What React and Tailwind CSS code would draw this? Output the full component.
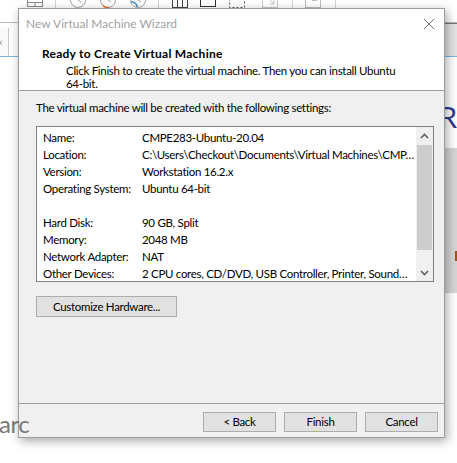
import React from "react";

const rows = [
  ["Name:", "CMPE283-Ubuntu-20.04"],
  ["Location:", "C:\\Users\\Checkout\\Documents\\Virtual Machines\\CMP…"],
  ["Version:", "Workstation 16.2.x"],
  ["Operating System:", "Ubuntu 64-bit"],
  ["", ""],
  ["Hard Disk:", "90 GB, Split"],
  ["Memory:", "2048 MB"],
  ["Network Adapter:", "NAT"],
  ["Other Devices:", "2 CPU cores, CD/DVD, USB Controller, Printer, Sound…"],
];

// body text: Lato squeezed a little to get Segoe UI widths
const txt = "text-[11.5px] tracking-[-0.3px] text-black";

const Sep = ({ ml }) => <div className={`w-px h-[8px] bg-[#d4d4d4] ${ml}`} />;

const Toolbar = () => (
  <div className="h-[23px] border-b border-[#b9b9b9] flex items-start">
    <svg className="ml-[27px] -mt-[8px]" width="16" height="16" viewBox="0 0 16 16" fill="none" stroke="#8a8a8a">
      <rect x="0.5" y="0.5" width="15" height="14" />
      <path d="M0.5 10.5h15M8 10.5v4.5" />
    </svg>
    <Sep ml="ml-[12px]" />
    <svg className="ml-[14px] -mt-[8px]" width="16" height="16" viewBox="0 0 16 16" fill="none" stroke="#a5a5a5">
      <circle cx="8" cy="8" r="7.5" />
      <path d="M8 3v5l3 2" />
    </svg>
    <svg className="ml-[14px] -mt-[8px]" width="16" height="16" viewBox="0 0 16 16" fill="none" stroke="#a5a5a5">
      <circle cx="8" cy="8" r="7.5" />
      <path d="M8 3v5l3 2" />
      <path d="M3 13.5a7 7 0 0 0 6 2" stroke="#e0703a" strokeWidth="1.5" />
    </svg>
    <svg className="ml-[14px] -mt-[8px]" width="16" height="16" viewBox="0 0 16 16" fill="none" stroke="#a5a5a5">
      <circle cx="8" cy="8" r="7.5" />
      <path d="M8 3v5l3 2" />
      <path d="M1 10a5 5 0 0 1 6 5" stroke="#3c8fd0" strokeWidth="1.5" />
    </svg>
    <Sep ml="ml-[12px]" />
    <svg className="ml-[13px] -mt-[8px]" width="16" height="16" viewBox="0 0 16 16" fill="none" stroke="#444">
      <rect x="0.5" y="0.5" width="15" height="15" />
      <path d="M5.5 0v16M10.5 0v16" />
    </svg>
    <svg className="ml-[12px] -mt-[8px]" width="16" height="16" viewBox="0 0 16 16" fill="none" stroke="#333">
      <rect x="0.5" y="0.5" width="15" height="14" />
    </svg>
    <svg className="ml-[13px] -mt-[8px]" width="16" height="16" viewBox="0 0 16 16" fill="none" stroke="#555">
      <rect x="0.5" y="0.5" width="15" height="15" strokeDasharray="2 2" />
      <rect x="5.5" y="2.5" width="5" height="5" />
    </svg>
    <svg className="ml-[17px] -mt-[8px]" width="16" height="16" viewBox="0 0 16 16" fill="none" stroke="#c8c8c8">
      <rect x="0.5" y="0.5" width="15" height="15" />
      <path d="M4 4l8 8M12 8v4H8" />
    </svg>
    <Sep ml="ml-[14px]" />
    <svg className="ml-[12px] -mt-[8px]" width="16" height="16" viewBox="0 0 16 16" fill="none" stroke="#bcbcbc">
      <rect x="0.5" y="0.5" width="15" height="15" />
      <path d="M3 2l3 3-3 3M7 8.5h5" />
    </svg>
    <Sep ml="ml-[14px]" />
  </div>
);

const Btn = ({ children, className = "" }) => (
  <button className={`bg-[#e1e1e1] border border-[#adadad] leading-none flex items-center justify-center ${txt} ${className}`}>
    {children}
  </button>
);

const Chevron = ({ up }) => (
  <svg width="9" height="6" viewBox="0 0 9 6" fill="none" stroke="#606060" strokeWidth="1.6">
    <path d={up ? "M1 5l3.5-3.5L8 5" : "M1 1l3.5 3.5L8 1"} />
  </svg>
);

const Dialog = () => (
  <div className="absolute left-[18px] top-[8px] w-[427px] h-[430px] flex flex-col bg-[#f0f0f0] border border-[#9c9c9c] shadow-[2px_3px_10px_rgba(0,0,0,0.35)]">
    <div className="bg-white">
      <div className="h-[30px] flex items-center justify-between pl-[7px] pr-[10px]">
        <span className="text-[12px] text-[#a0a0a0]">New Virtual Machine Wizard</span>
        <svg width="10" height="10" viewBox="0 0 10 10" stroke="#707070" strokeWidth="1">
          <path d="M0 0l10 10M10 0L0 10" />
        </svg>
      </div>
      <div className="h-[51px] pt-[7px] pl-[23px]">
        <div className="text-[12px] leading-[16px] tracking-[0.25px] font-bold text-black">Ready to Create Virtual Machine</div>
        <div className={`mt-[2px] pl-[24px] leading-[13px] ${txt}`}>
          Click Finish to create the virtual machine. Then you can install Ubuntu
          <br />
          64-bit.
        </div>
      </div>
    </div>
    <div className="h-px bg-[#a0a0a0]" />
    <div className="flex-1 pl-[17px] pr-[10px] pt-[9px]">
      <div className={`leading-[16px] ${txt}`}>The virtual machine will be created with the following settings:</div>
      <div className="mt-[10px] h-[156px] border border-[#828282] bg-white flex">
        <div className="flex-1 pt-[2px] pl-[6px] overflow-hidden">
          {rows.map(([k, v], i) => (
            <div key={i} className={`h-[17px] flex items-center whitespace-nowrap ${txt}`}>
              <span className="w-[99px] shrink-0">{k}</span>
              <span>{v}</span>
            </div>
          ))}
        </div>
        <div className="w-[17px] bg-[#f0f0f0] flex flex-col">
          <div className="h-[17px] flex items-center justify-center"><Chevron up /></div>
          <div className="flex-1 pt-px px-px">
            <div className="h-[105px] bg-[#cdcdcd]" />
          </div>
          <div className="h-[17px] flex items-center justify-center"><Chevron /></div>
        </div>
      </div>
      <Btn className="mt-[14px] w-[141px] h-[21px]">Customize Hardware...</Btn>
    </div>
    <div className="h-px bg-[#a0a0a0]" />
    <div className="h-[33px] pt-[8px] pr-[6px] flex justify-end gap-[8px]">
      <Btn className="w-[73px] h-[20px]">&lt; Back</Btn>
      <Btn className="w-[73px] h-[20px]">Finish</Btn>
      <Btn className="w-[73px] h-[20px]">Cancel</Btn>
    </div>
  </div>
);

export default function App() {
  return (
    <div className="relative w-[457px] h-[463px] overflow-hidden bg-white font-['Lato','Liberation_Sans',sans-serif]">
      <div className="h-full flex flex-col">
        <Toolbar />
        <div className="h-[34px] flex border-b-[1px] border-[#7fb5e0]">
          <div className="w-[9px] bg-[#fafafa] border-r border-[#c8c8c8] mt-[5px] flex items-center overflow-hidden">
            <span className="-ml-[3px] text-[10px] text-[#888]">×</span>
          </div>
          <div className="w-[430px] bg-white" />
          <div className="flex-1 bg-[#e4e4e4] border-t border-[#777]" />
        </div>
        <div className="flex-1 flex">
          <div className="w-[444px] flex flex-col justify-end pb-[24px]">
            <span className="relative z-10 -ml-[1px] text-[24px] leading-[30px] tracking-[-0.5px] text-[#777]">arc</span>
          </div>
          <div className="flex-1 flex flex-col">
            <span className="mt-[44px] pl-[2px] text-[28px] leading-[32px] text-[#2d3a8c]">R</span>
            <div className="mt-[15px] h-[145px] bg-[#d6d6d6] flex items-center justify-end pt-[70px]">
              <div className="w-[2px] h-[10px] bg-[#a0521c]" />
            </div>
          </div>
        </div>
      </div>
      <Dialog />
    </div>
  );
}
